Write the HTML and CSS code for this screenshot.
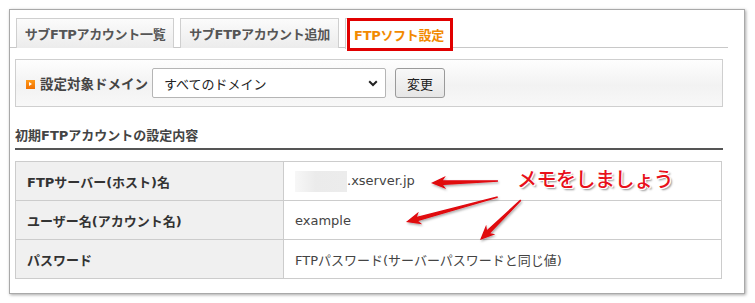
FILE: index.html
```html
<!DOCTYPE html>
<html lang="ja">
<head>
<meta charset="utf-8">
<link rel="stylesheet" href="styles.css">
</head>
<body>
<div class="frame">
  <div class="tabs">
    <div class="tab">サブFTPアカウント一覧</div>
    <div class="tab">サブFTPアカウント追加</div>
    <div class="tab active">FTPソフト設定<span class="hl"></span></div>
  </div>
  <div class="content">
    <div class="domainbox">
      <span class="ico"></span>
      <span class="dlabel">設定対象ドメイン</span>
      <div class="select"><span>すべてのドメイン</span>
        <svg class="chev" width="10" height="7" viewBox="0 0 10 7"><path d="M1.2 1.3 L5 5 L8.8 1.3" fill="none" stroke="#222" stroke-width="2"/></svg>
      </div>
      <div class="btn">変更</div>
    </div>
    <h2 class="heading">初期FTPアカウントの設定内容</h2>
    <table class="info">
      <tr><th>FTPサーバー(ホスト)名</th><td><span class="blur"></span>.xserver.jp</td></tr>
      <tr><th>ユーザー名(アカウント名)</th><td>example</td></tr>
      <tr><th>パスワード</th><td>FTPパスワード(サーバーパスワードと同じ値)</td></tr>
    </table>
  </div>
</div>
<div class="memo">メモをしましょう</div>
<svg class="arrows" width="755" height="303" viewBox="0 0 755 303">
  <defs>
    <filter id="sh" x="-20%" y="-20%" width="140%" height="140%">
      <feDropShadow dx="1" dy="1.5" stdDeviation="1" flood-color="#000" flood-opacity="0.35"/>
    </filter>
  </defs>
  <g fill="#e0070f" filter="url(#sh)">
    <polygon transform="translate(431,183) rotate(-1.7)" points="0,0 15,-6.5 12,-2.3 67,-0.8 67,0.8 12,2.3 15,6.5"/>
    <polygon transform="translate(406,222) rotate(-15.2)" points="0,0 15,-6.5 12,-2.3 95,-0.8 95,0.8 12,2.3 15,6.5"/>
    <polygon transform="translate(480,240) rotate(-44.3)" points="0,0 15,-6.5 12,-2.3 57,-0.8 57,0.8 12,2.3 15,6.5"/>
  </g>
</svg>
</body>
</html>
```
FILE: styles.css
```css
* { box-sizing: border-box; }
html, body { margin: 0; padding: 0; background: #fff; }
body {
  width: 755px; height: 303px; position: relative; overflow: hidden;
  font-family: "DejaVu Sans", "Noto Sans CJK JP", sans-serif;
  font-size: 13px; color: #444;
}
.frame {
  margin: 9px 0 0 9px;
  width: 736px; height: 285px;
  border: 1px solid #a9a9a9;
  box-shadow: 1px 1px 3px rgba(0,0,0,0.35);
  background: #fff;
}
.tabs {
  display: flex;
  gap: 6px;
  margin-top: 8px;
  margin-right: 16px;
  padding-left: 6px;
  border-bottom: 1px solid #c8c8c8;
  height: 30px;
}
.tab {
  position: relative;
  height: 30px;
  border: 1px solid #cfcfcf;
  border-bottom: none;
  background: linear-gradient(#fbfbfb, #ececec);
  color: #555;
  font-weight: bold;
  font-size: 13px;
  padding: 0;
  white-space: nowrap;
  display: flex; align-items: center; justify-content: center;
  letter-spacing: -0.3px;
}
.tab:nth-child(1) { width: 158px; }
.tab:nth-child(2) { width: 159px; }
.tab.active {
  width: 108px;
  background: #fff;
  color: #f28a00;
  height: 31px;
  padding-top: 1px;
}
.hl {
  position: absolute;
  left: 1px; top: -1px;
  width: 106px; height: 33px;
  border: 3px solid #e10000;
}
.content { padding: 11px 21px 0 5px; }
.domainbox {
  height: 48px;
  border: 1px solid #cfcfcf;
  background: linear-gradient(#fefefe 0%, #f2f2f2 55%, #f8f8f8 100%);
  display: flex; align-items: center;
  padding-left: 10px;
}
.ico {
  width: 9px; height: 9px;
  background: linear-gradient(#ff9a1a, #f07000);
  position: relative; margin-top: 3px;
}
.ico::after {
  content: ""; position: absolute; left: 3px; top: 2px;
  border-left: 3px solid #fff; border-top: 2.5px solid transparent; border-bottom: 2.5px solid transparent;
}
.dlabel {
  margin-left: 5px;
  font-weight: bold; color: #444; font-size: 13.5px;
  width: 112px; white-space: nowrap;
}
.select {
  width: 234px; height: 30px;
  border: 1px solid #b5b5b5; border-radius: 2px;
  background: #fff;
  display: flex; align-items: center; justify-content: space-between;
  padding: 0 7px 0 11px;
  color: #222;
}
.btn {
  margin-left: 9px;
  width: 50px; height: 30px;
  border: 1px solid #9a9a9a; border-radius: 3px;
  background: linear-gradient(#f8f8f8, #e6e6e6);
  display: flex; align-items: center; justify-content: center;
  color: #222;
}
.heading {
  margin: 20px 0 0 0;
  font-size: 13px; font-weight: bold; color: #444;
  height: 23px; line-height: 17px;
  border-bottom: 2px solid #555;
}
.info {
  margin-top: 11px;
  width: 707px;
  border-collapse: collapse;
}
.info th, .info td {
  border: 1px solid #cccccc;
  height: 39px;
  text-align: left;
  padding: 0 11px;
  font-size: 13px;
}
.info th {
  width: 268px;
  background: #f0f0f0;
  color: #333;
  font-weight: bold;
}
.info td { color: #444; padding-left: 11px; }
.blur {
  display: inline-block; vertical-align: middle;
  width: 52px; height: 21px;
  background: linear-gradient(90deg, #f7f7f7 0%, #ebebeb 40%, #ececec 100%);
}
.memo {
  position: absolute; left: 517px; top: 164px;
  font-family: "Noto Sans CJK JP", sans-serif;
  font-size: 20px; font-weight: 500;
  color: #e8101a; letter-spacing: -0.5px;
  text-shadow: -1px 0 #fff, 1px 0 #fff, 0 -1px #fff, 0 1px #fff, 1px 1px #fff, -1px -1px #fff, 2px 2px 2px rgba(0,0,0,0.45);
}
.arrows { position: absolute; left: 0; top: 0; pointer-events: none; }
```
